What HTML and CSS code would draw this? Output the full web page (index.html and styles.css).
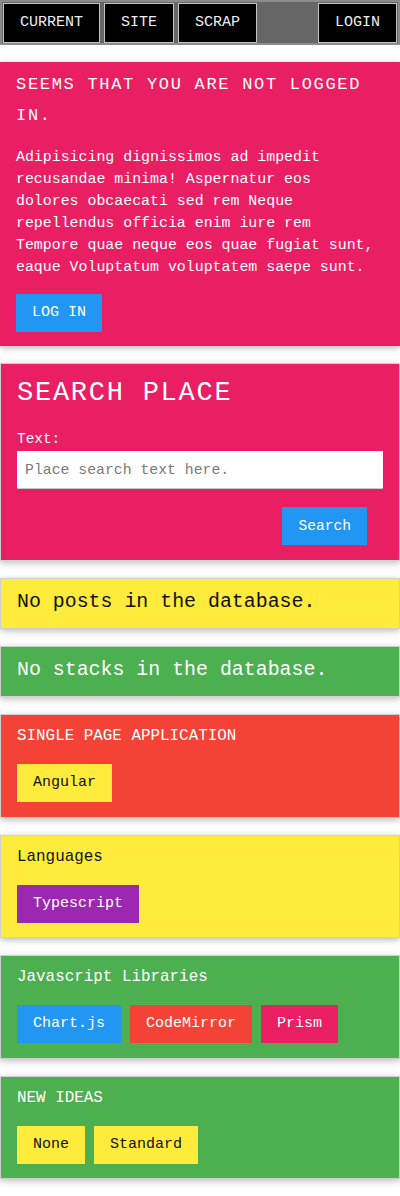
FILE: index.html
```html
<!DOCTYPE html>
<html>
<head>
<meta charset="utf-8">
<link rel="stylesheet" href="styles.css">
</head>
<body>
<nav class="nav">
  <a class="nav-btn">CURRENT</a>
  <a class="nav-btn">SITE</a>
  <a class="nav-btn">SCRAP</a>
  <span class="nav-spacer"></span>
  <a class="nav-btn">LOGIN</a>
</nav>

<section class="card card-pink card-login">
  <h2 class="login-title">SEEMS THAT YOU ARE NOT LOGGED IN.</h2>
  <p class="login-text">Adipisicing dignissimos ad impedit recusandae minima! Aspernatur eos dolores obcaecati sed rem Neque repellendus officia enim iure rem Tempore quae neque eos quae fugiat sunt, eaque Voluptatum voluptatem saepe sunt.</p>
  <div class="login-actions">
    <a class="btn btn-blue">LOG IN</a>
  </div>
</section>

<section class="card card-pink card-bordered card-search">
  <h1 class="search-title">SEARCH PLACE</h1>
  <label class="search-label">Text:</label>
  <input class="search-input" type="text" placeholder="Place search text here.">
  <div class="search-actions">
    <a class="btn btn-blue">Search</a>
  </div>
</section>

<section class="card card-yellow card-bordered card-msg">No posts in the database.</section>
<section class="card card-green card-bordered card-msg">No stacks in the database.</section>

<section class="card card-red card-bordered card-tags">
  <h3 class="tags-title">SINGLE PAGE APPLICATION</h3>
  <div class="tag-list">
    <span class="tag tag-yellow">Angular</span>
  </div>
</section>

<section class="card card-yellow card-bordered card-tags">
  <h3 class="tags-title">Languages</h3>
  <div class="tag-list">
    <span class="tag tag-purple">Typescript</span>
  </div>
</section>

<section class="card card-green card-bordered card-tags">
  <h3 class="tags-title">Javascript Libraries</h3>
  <div class="tag-list">
    <span class="tag tag-blue">Chart.js</span>
    <span class="tag tag-red">CodeMirror</span>
    <span class="tag tag-pink">Prism</span>
  </div>
</section>

<section class="card card-green card-bordered card-tags">
  <h3 class="tags-title">NEW IDEAS</h3>
  <div class="tag-list">
    <span class="tag tag-yellow">None</span>
    <span class="tag tag-yellow">Standard</span>
  </div>
</section>
</body>
</html>
```
FILE: styles.css
```css
* { box-sizing: border-box; }
html, body { margin: 0; padding: 0; background: #fff; }
body {
  font-family: "Liberation Mono", "DejaVu Sans Mono", monospace;
  font-size: 14.9px;
  color: #fff;
  width: 400px;
}

.nav {
  display: flex;
  gap: 4px;
  height: 45px;
  padding: 1px 1px 0 1px;
  background: #666;
  border: 2px solid #8c8c8c;
  margin-bottom: 17px;
}
.nav-btn {
  display: block;
  height: 40px;
  line-height: 38px;
  padding: 0 16px;
  background: #000;
  border: 1px solid #c4c4c4;
  color: #eee;
  font-size: 15px;
}
.nav-spacer { flex: 1; }

.card {
  margin: 0 0 17px 0;
  box-shadow: 0 2px 5px 0 rgba(0,0,0,0.16), 0 2px 10px 0 rgba(0,0,0,0.12);
}
.card-bordered { border: 1px solid #cfcfcf; }
.card-pink { background: #E91E63; color: #fff; }
.card-yellow { background: #FFEB3B; color: #111; }
.card-green { background: #4CAF50; color: #fff; }
.card-red { background: #F44336; color: #fff; }

.card-login { padding: 7px 16px 14px 16px; }
.login-title {
  margin: 0;
  font-weight: normal;
  font-size: 17px;
  letter-spacing: 1.7px;
  line-height: 31px;
}
.login-text {
  margin: 15px 0 16px 0;
  width: 362px;
  line-height: 22px;
}
.login-actions { display: flex; }

.btn {
  display: block;
  height: 38px;
  line-height: 38px;
  padding: 0 16px;
  color: #fff;
  font-size: 15px;
}
.btn-blue { background: #2196F3; }

.card-search { padding: 16px 16px 15px 16px; }
.search-title {
  margin: 0;
  font-weight: normal;
  font-size: 27px;
  letter-spacing: 1.75px;
  line-height: 26px;
}
.search-label {
  display: block;
  margin-top: 24px;
  line-height: 18px;
  font-size: 14.4px;
}
.search-input {
  display: block;
  width: 100%;
  height: 38px;
  margin-top: 3px;
  padding: 0 8px;
  border: none;
  border-bottom: 1px solid #c8c8c8;
  background: #fff;
  font-family: inherit;
  font-size: 14.8px;
  color: #222;
  outline: none;
}
.search-input::placeholder { color: #7a7a7a; }
.search-actions {
  display: flex;
  justify-content: flex-end;
  margin-top: 18px;
  padding-right: 16px;
}
.search-actions .btn { font-size: 14.6px; }

.card-msg {
  padding: 12px 16px 15px 16px;
  font-size: 19.9px;
  line-height: 22px;
}

.card-tags { padding: 10px 16px 14.5px 16px; }
.tags-title {
  margin: 0 0 17px 0;
  font-weight: normal;
  font-size: 15.9px;
  line-height: 22px;
}
.tag-list {
  display: flex;
  flex-wrap: wrap;
  gap: 9px;
}
.tag {
  display: block;
  height: 38px;
  line-height: 38px;
  padding: 0 16px;
  font-size: 15px;
}
.tag-yellow { background: #FFEB3B; color: #111; }
.tag-purple { background: #9C27B0; color: #fff; }
.tag-blue { background: #2196F3; color: #fff; }
.tag-red { background: #F44336; color: #fff; }
.tag-pink { background: #E91E63; color: #fff; }
```
